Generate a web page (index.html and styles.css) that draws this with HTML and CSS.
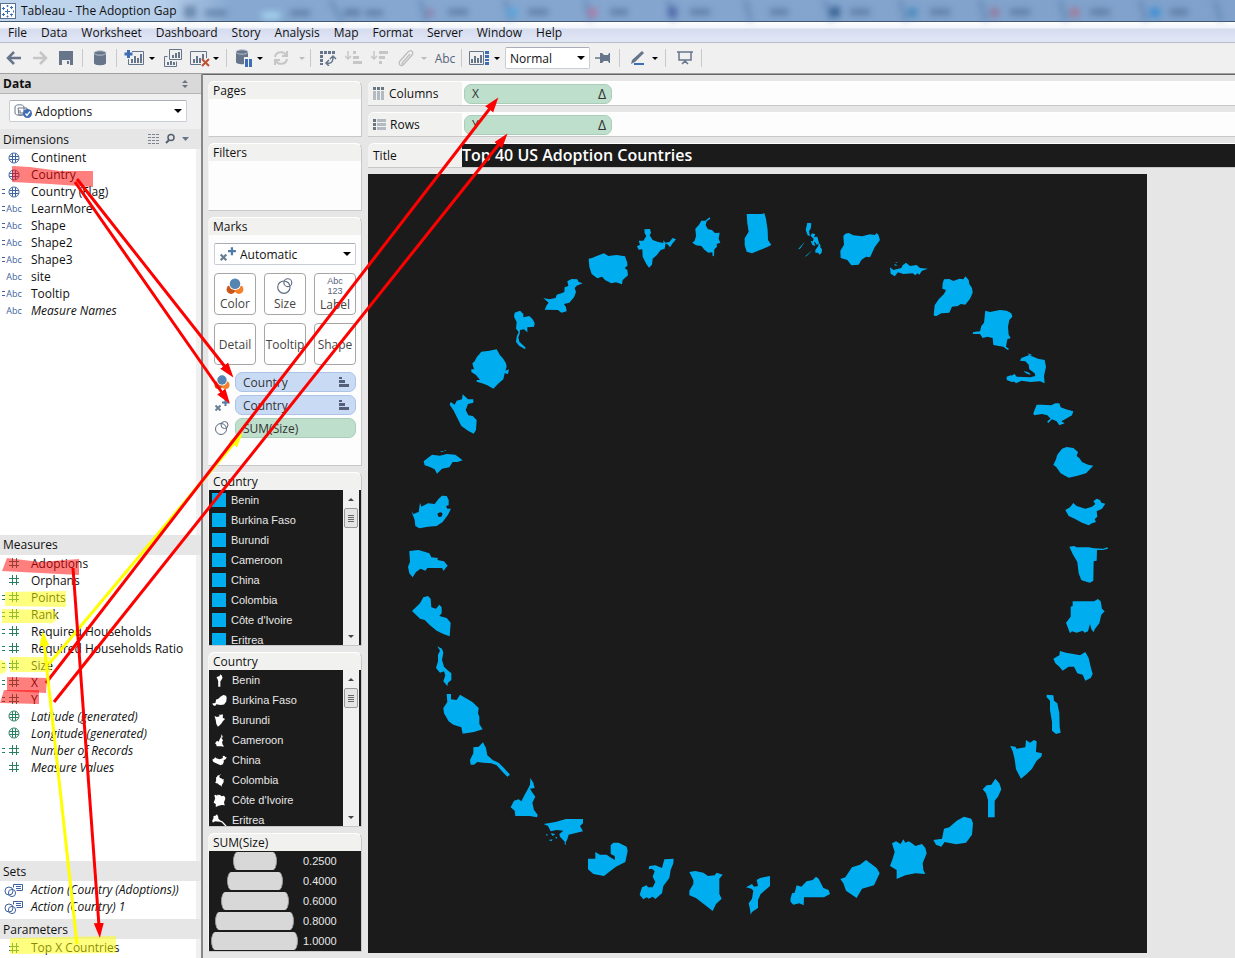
FILE: index.html
```html
<!DOCTYPE html>
<html lang="en">
<head>
<meta charset="utf-8">
<title>Tableau - The Adoption Gap</title>
<link rel="stylesheet" href="styles.css">
</head>
<body>
<svg class="defs" width="0" height="0" aria-hidden="true">
  <defs>
    <symbol id="globe" viewBox="0 0 12 12"><circle cx="6" cy="6" r="5"/><path d="M4.500 1.500v9M7.500 1.500v9M1.500 4.500h9M1.500 7.500h9"/></symbol>
    <symbol id="hash" viewBox="0 0 12 12"><path d="M4.500 1v10M8.500 1v10M1 4.500h10M1 8.500h10"/></symbol>
    <symbol id="set" viewBox="0 0 20 14"><circle cx="5" cy="8" r="4"/><circle cx="8" cy="10" r="3.600"/><path d="M9.500 1.500h9v6h-6M9.500 1.500v3M12 3.500h5M12 5.500h5"/></symbol>
    <symbol id="colors" viewBox="0 0 16 16"><circle cx="4.500" cy="11" r="4" fill="#c8571a"/><circle cx="11.500" cy="11" r="4" fill="#f5812a"/><circle cx="8" cy="6" r="5.500" fill="#fff"/><circle cx="8" cy="6" r="4.700" fill="#5585b0"/></symbol>
    <symbol id="sizes" viewBox="0 0 16 16"><circle cx="7" cy="9" r="5.500" fill="none" stroke="#5c6b80"/><circle cx="10.500" cy="5" r="3.500" fill="none" stroke="#5c6b80"/></symbol>
    <symbol id="shapes" viewBox="0 0 16 16"><path d="M1.500 8.500l5 5M6.500 8.500l-5 5" stroke="#6b7f94" stroke-width="2"/><path d="M11.500 2v7M8 5.500h7" stroke="#4f7ba6" stroke-width="2"/></symbol>
    <symbol id="sort" viewBox="0 0 12 12"><path d="M1 1h3v2H1zM1 4h6v3H1zM1 8h10v3H1z" fill="#555f77"/></symbol>
  </defs>
</svg>

<div class="app">
  <header class="titlebar">
    <svg class="tabs-behind" viewBox="0 0 1235 21" preserveAspectRatio="none" aria-hidden="true">
      <g class="tab-seams"><path d="M330 0l12 21M420 0l6 21M505 0l6 21M585 0l6 21M668 0l6 21M745 0l6 21M825 0l6 21M900 0l6 21M980 0l6 21M1060 0l6 21M1140 0l6 21M1215 0l6 21"/></g>
      <g class="tab-dark"><path d="M184 6h12v12h-12zM344 9h16v7h-16zM448 9h20v6h-20zM528 9h20v6h-20zM610 9h18v6h-18zM690 9h20v6h-20zM770 9h18v6h-18zM850 9h20v6h-20zM930 9h20v6h-20zM1010 9h20v6h-20zM1090 9h20v6h-20zM1170 9h18v6h-18zM205 10h22v6h-22zM290 10h20v6h-20zM365 10h18v6h-18z"/></g>
      <g><path d="M426 9h8v8h-8z" fill="#8d86ac"/><path d="M508 8h9v9h-9z" fill="#5aa5dc"/><path d="M588 8h9v9h-9z" fill="#ab7da8"/><path d="M668 7h9v10h-9z" fill="#4f69a8"/><path d="M830 7h10v10h-10z" fill="#3b6594"/><path d="M908 8h9v9h-9z" fill="#4a8cbd"/><path d="M990 8h9v9h-9z" fill="#947c9f"/><path d="M1070 8h9v9h-9z" fill="#a07b99"/><path d="M1150 8h10v9h-10z" fill="#3f8fd4"/><path d="M262 12h18v7h-18z" fill="#a5d3ee"/></g>
    </svg>
    <svg class="logo" viewBox="0 0 16 16" aria-hidden="true"><rect x=".5" y=".5" width="15" height="15" fill="#fff" stroke="#59708e"/><path d="M7.500 6v5M5 8.500h5M3.500 4v3M2 5.500h3M11.500 3v3M10 4.500h3M3.500 10v3M2 11.500h3M11.500 10.500v3M10 11.500h3M7.500 2v2M6.500 3h2M7.500 12.500v2M6.500 13.500h2M13.500 7.500v2" stroke="#3a6fb5"/></svg>
    <h1>Tableau - The Adoption Gap</h1>
  </header>

  <nav class="menubar" aria-label="Menu">
    <button>File</button><button>Data</button><button>Worksheet</button><button>Dashboard</button><button>Story</button><button>Analysis</button><button>Map</button><button>Format</button><button>Server</button><button>Window</button><button>Help</button>
  </nav>

  <div class="toolbar" role="toolbar" aria-label="Toolbar">
    <button aria-label="Back"><svg width="16" height="16" viewBox="0 0 16 16"><path d="M15 8H3M8 2L2 8l6 6" fill="none" stroke="#66758a" stroke-width="2.500"/></svg></button>
    <button aria-label="Forward"><svg width="16" height="16" viewBox="0 0 16 16"><path d="M1 8h12M8 2l6 6-6 6" fill="none" stroke="#c6c6c6" stroke-width="2.500"/></svg></button>
    <button aria-label="Save"><svg width="16" height="16" viewBox="0 0 16 16"><path d="M1 1h14v14H1z" fill="#66758a"/><path d="M4 10h8v5H4z" fill="#eee"/><path d="M9 11h2v3H9z" fill="#66758a"/></svg></button>
    <span class="sep"></span>
    <button aria-label="Connect to data"><svg width="16" height="16" viewBox="0 0 16 16"><path d="M2 3v10c0 3 12 3 12 0V3z" fill="#66758a"/><ellipse cx="8" cy="3" rx="6" ry="2.200" fill="#66758a" stroke="#b7bfca"/></svg></button>
    <span class="sep"></span>
    <button aria-label="New worksheet"><svg width="20" height="18" viewBox="0 0 20 18"><path d="M8 2.500h11.500v13H4.500V10" fill="none" stroke="#66758a"/><path d="M7 10h2v4H7zM10 7h2v7h-2zM13 9h2v5h-2zM16 5h2v9h-2z" fill="#66758a"/><path d="M4.500 1v8M.5 5h8" stroke="#3e6db5" stroke-width="3"/></svg></button>
    <button class="caret" aria-label="New worksheet options"></button>
    <button class="wide" aria-label="Duplicate"><svg width="18" height="18" viewBox="0 0 18 18"><path d="M5.500.5h12v10h-12zM3.500 7.500h-3v10h12v-5" fill="none" stroke="#66758a"/><path d="M8 6h2v3H8zM11 4h2v5h-2zM14 3h2v6h-2zM3 13h2v3H3zM6 12h2v4H6zM9 13h2v3H9z" fill="#66758a"/></svg></button>
    <button class="narrow" aria-label="Clear sheet"><svg width="20" height="18" viewBox="0 0 20 18"><path d="M11 15.500H.5v-13h16V9" fill="none" stroke="#66758a"/><path d="M3 10h2v4H3zM6 7h2v7H6zM9 9h2v5H9zM12 5h2v5h-2z" fill="#66758a"/><path d="M12 10l7 7M19 10l-7 7" stroke="#bd5130" stroke-width="2"/></svg></button>
    <button class="caret" aria-label="Clear options"></button>
    <span class="sep roomy"></span>
    <button class="narrow" aria-label="Pause auto updates"><svg width="18" height="18" viewBox="0 0 18 18"><path d="M1 3v10c0 2 6 2.500 8 2V8h4V3z" fill="#66758a"/><ellipse cx="7" cy="3" rx="6" ry="2.200" fill="#66758a" stroke="#b7bfca"/><path d="M10 10h3v8h-3zM14 10h3v8h-3z" fill="#3e6db5"/></svg></button>
    <button class="caret" aria-label="Auto update options"></button>
    <button class="wide" aria-label="Run update"><svg width="16" height="16" viewBox="0 0 16 16"><path d="M2 7c1-6 9-6 11-2M14 9c-1 6-9 6-11 2M14 1v5H9M2 15v-5h5" fill="none" stroke="#c6c6c6" stroke-width="2"/></svg></button>
    <button class="caret off" aria-label="Update options"></button>
    <span class="sep"></span>
    <button aria-label="Swap"><svg width="18" height="16" viewBox="0 0 18 16"><path d="M1 1h3v3H1zM5 1h3v3H5zM9 1h3v3H9zM13 1h3v3h-3zM1 5h3v3H1zM1 9h3v3H1zM1 13h3v2H1z" fill="#66758a"/><path d="M8 13c5 1 6-2 6-6M11 9l3-3 3 3M10 10l-3 3 3 3" fill="none" stroke="#66758a" stroke-width="1.500"/></svg></button>
    <button aria-label="Sort ascending"><svg width="18" height="16" viewBox="0 0 18 16"><path d="M3 1v8M0 6l3 3 3-3" fill="none" stroke="#c6c6c6" stroke-width="1.500"/><path d="M8 1h3v3H8zM8 6h6v3H8zM8 11h9v3H8z" fill="#c6c6c6"/></svg></button>
    <button aria-label="Sort descending"><svg width="18" height="16" viewBox="0 0 18 16"><path d="M3 1v8M0 6l3 3 3-3" fill="none" stroke="#c6c6c6" stroke-width="1.500"/><path d="M8 1h9v3H8zM8 6h6v3H8zM8 11h3v3H8z" fill="#c6c6c6"/></svg></button>
    <button aria-label="Group"><svg width="16" height="18" viewBox="0 0 16 18"><path d="M12 5l-7 8c-2 2 0 3 1 2l8-9c2-3-1-6-4-3L2 12c-2 3 1 6 3 4" fill="none" stroke="#bdbdbd" stroke-width="1.300"/></svg></button>
    <button class="caret off" aria-label="Group options"></button>
    <button class="wide abc">Abc</button>
    <span class="sep tight"></span>
    <button aria-label="Show cards"><svg width="20" height="16" viewBox="0 0 20 16"><path d="M.5 1.500h14v13H.5z" fill="none" stroke="#66758a"/><path d="M2 9h2v4H2zM5 6h2v7H5zM8 8h2v5H8zM11 5h2v8h-2z" fill="#66758a"/><path d="M16 1h4v3h-4zM16 5h4v3h-4zM16 9h4v2h-4zM16 12h4v3h-4z" fill="#3e6db5"/></svg></button>
    <button class="caret" aria-label="Card options"></button>
    <span class="select fit"><select aria-label="Fit"><option>Normal</option></select></span>
    <button aria-label="Fix axes"><svg width="16" height="12" viewBox="0 0 16 12"><path d="M0 6h6" stroke="#66758a" stroke-width="1.500"/><path d="M5 1h2l2 2h4l1-2h1v10h-1l-1-2H9l-2 2H5z" fill="#66758a"/></svg></button>
    <span class="sep"></span>
    <button aria-label="Highlight"><svg width="16" height="16" viewBox="0 0 16 16"><path d="M13 1l2 2-9 9-4 2 1-4z" fill="#66758a"/><path d="M5 14h10" stroke="#3e6db5" stroke-width="2"/></svg></button>
    <button class="caret" aria-label="Highlight options"></button>
    <span class="sep roomy"></span>
    <button aria-label="Presentation mode"><svg width="16" height="16" viewBox="0 0 16 16"><path d="M0 2h16M2 2v8h12V2M8 10v2M5 14l3-3 3 3" fill="none" stroke="#66758a" stroke-width="1.500"/></svg></button>
    <span class="sep"></span>
  </div>

  <div class="main">
    <aside class="data-pane">
      <div class="pane-head"><h2>Data</h2><svg width="6" height="8" viewBox="0 0 6 8"><path d="M0 3l3-3 3 3zM0 5h6L3 8z" fill="#6b7280"/></svg></div>
      <div class="source">
        <span class="select"><svg class="source-icon" width="18" height="14" viewBox="0 0 18 14" aria-hidden="true"><path d="M1 3c0-3 9-3 9 0v6c0 3-9 3-9 0zM4 4h9v7H5z" fill="#fff" stroke="#66758a"/><path d="M6 6v3h4" fill="none" stroke="#66758a"/><circle cx="13.500" cy="9.500" r="4.500" fill="#3e6db5"/><path d="M11.500 9.500l1.500 2 3-4" fill="none" stroke="#fff" stroke-width="1.300"/></svg><select aria-label="Data source"><option>Adoptions</option></select></span>
      </div>

      <div class="section-head"><h3>Dimensions</h3>
        <svg width="42" height="12" viewBox="0 0 42 12" aria-hidden="true"><path d="M0 1.500h12M0 4.500h12M0 7.500h12M0 10.500h12" stroke="#7b8490" stroke-dasharray="3 1"/><circle cx="23" cy="4.500" r="3" fill="none" stroke="#55606f" stroke-width="1.500"/><path d="M21 7l-3 3" stroke="#55606f" stroke-width="2"/><path d="M34 4h7l-3.500 4z" fill="#66758a"/></svg>
      </div>
      <ul class="fields blue dims">
        <li><i><svg><use href="#globe"/></svg></i>Continent</li>
        <li><i><svg><use href="#globe"/></svg></i>Country</li>
        <li><i class="calc"><svg><use href="#globe"/></svg></i>Country (Flag)</li>
        <li><i class="calc">Abc</i>LearnMore</li>
        <li><i class="calc">Abc</i>Shape</li>
        <li><i class="calc">Abc</i>Shape2</li>
        <li><i class="calc">Abc</i>Shape3</li>
        <li><i>Abc</i>site</li>
        <li><i class="calc">Abc</i>Tooltip</li>
        <li class="gen"><i>Abc</i>Measure Names</li>
      </ul>

      <div class="section-head"><h3>Measures</h3></div>
      <ul class="fields green measures">
        <li><i><svg><use href="#hash"/></svg></i>Adoptions</li>
        <li><i><svg><use href="#hash"/></svg></i>Orphans</li>
        <li><i class="calc"><svg><use href="#hash"/></svg></i>Points</li>
        <li><i class="calc"><svg><use href="#hash"/></svg></i>Rank</li>
        <li><i class="calc"><svg><use href="#hash"/></svg></i>Required Households</li>
        <li><i class="calc"><svg><use href="#hash"/></svg></i>Required Households Ratio</li>
        <li><i class="calc"><svg><use href="#hash"/></svg></i>Size</li>
        <li><i class="calc"><svg><use href="#hash"/></svg></i>X</li>
        <li><i class="calc"><svg><use href="#hash"/></svg></i>Y</li>
        <li class="gen"><i><svg><use href="#globe"/></svg></i>Latitude (generated)</li>
        <li class="gen"><i><svg><use href="#globe"/></svg></i>Longitude (generated)</li>
        <li class="gen"><i class="calc"><svg><use href="#hash"/></svg></i>Number of Records</li>
        <li class="gen"><i><svg><use href="#hash"/></svg></i>Measure Values</li>
      </ul>

      <div class="section-head"><h3>Sets</h3></div>
      <ul class="fields blue sets">
        <li class="gen"><i><svg class="set-icon"><use href="#set"/></svg></i>Action (Country (Adoptions))</li>
        <li class="gen"><i><svg class="set-icon"><use href="#set"/></svg></i>Action (Country) 1</li>
      </ul>
      <div class="section-head"><h3>Parameters</h3></div>
      <ul class="fields green"><li><i><svg><use href="#hash"/></svg></i>Top X Countries</li></ul>
    </aside>

    <div class="workspace">
      <div class="cards">
        <section class="card"><h3>Pages</h3><div class="drop pages"></div></section>
        <section class="card"><h3>Filters</h3><div class="drop filters"></div></section>
        <section class="card"><h3>Marks</h3>
          <div class="marks">
            <span class="select"><svg width="18" height="18" aria-hidden="true"><use href="#shapes"/></svg><select aria-label="Mark type"><option>Automatic</option></select></span>
            <div class="mark-buttons">
              <button><svg width="18" height="18"><use href="#colors"/></svg>Color</button>
              <button><svg width="18" height="18"><use href="#sizes"/></svg>Size</button>
              <button class="label"><small>Abc</small><small>123</small>Label</button>
              <button>Detail</button><button>Tooltip</button><button>Shape</button>
            </div>
            <div class="encodings">
              <svg width="16" height="16"><use href="#colors"/></svg><button class="pill dim">Country<svg width="12" height="12"><use href="#sort"/></svg></button>
              <svg width="16" height="16"><use href="#shapes"/></svg><button class="pill dim">Country<svg width="12" height="12"><use href="#sort"/></svg></button>
              <svg width="16" height="16"><use href="#sizes"/></svg><button class="pill">SUM(Size)</button>
            </div>
          </div>
        </section>

        <section class="card"><h3>Country</h3>
          <div class="legend">
            <ul>
              <li><b></b>Benin</li><li><b></b>Burkina Faso</li><li><b></b>Burundi</li><li><b></b>Cameroon</li><li><b></b>China</li><li><b></b>Colombia</li><li><b></b>Côte d'Ivoire</li><li><b></b>Eritrea</li>
            </ul>
            <div class="scroll"><span class="up"></span><span class="thumb"></span><span class="down"></span></div>
          </div>
        </section>

        <section class="card"><h3>Country</h3>
          <div class="legend shape-legend">
            <ul>
              <li><svg viewBox="664 774 64 120"><use href="#benin"/></svg>Benin</li>
              <li><svg viewBox="518 888 124 94"><use href="#burkina"/></svg>Burkina Faso</li>
              <li><svg viewBox="748 658 100 120"><use href="#burundi"/></svg>Burundi</li>
              <li><svg viewBox="330 772 86 122"><use href="#cameroon"/></svg>Cameroon</li>
              <li><svg viewBox="914 894 124 84"><use href="#china"/></svg>China</li>
              <li><svg viewBox="874 50 90 122"><use href="#colombia"/></svg>Colombia</li>
              <li><svg viewBox="388 956 114 122"><use href="#ivoire"/></svg>Côte d'Ivoire</li>
              <li><svg viewBox="208 665 124 108"><use href="#eritrea"/></svg>Eritrea</li>
            </ul>
            <div class="scroll"><span class="up"></span><span class="thumb"></span><span class="down"></span></div>
          </div>
        </section>

        <section class="card"><h3>SUM(Size)</h3>
          <ul class="size-legend">
            <li><span><b style="width:44px"></b></span>0.2500</li>
            <li><span><b style="width:56px"></b></span>0.4000</li>
            <li><span><b style="width:68px"></b></span>0.6000</li>
            <li><span><b style="width:79px"></b></span>0.8000</li>
            <li><span><b style="width:87px"></b></span>1.0000</li>
          </ul>
        </section>
      </div>

      <div class="sheet">
        <div class="shelf"><h3><svg width="12" height="13" viewBox="0 0 12 13"><path d="M0 0h3v3H0zM4 0h3v3H4zM8 0h3v3H8z" fill="#6b7683"/><path d="M0 4h3v9H0zM4 4h3v9H4zM8 4h3v9H8z" fill="#b4bac1"/></svg>Columns</h3><div class="well"><button class="pill">X<span>Δ</span></button></div></div>
        <div class="shelf"><h3><svg width="13" height="11" viewBox="0 0 13 11"><path d="M0 0h3v3H0zM0 4h3v3H0zM0 8h3v3H0z" fill="#6b7683"/><path d="M4 0h9v3H4zM4 4h9v3H4zM4 8h9v3H4z" fill="#b4bac1"/></svg>Rows</h3><div class="well"><button class="pill">Y<span>Δ</span></button></div></div>
        <div class="shelf"><h3>Title</h3><div class="well sheet-title"><h2>Top 40 US Adoption Countries</h2></div></div>

        <svg class="viz" viewBox="0 0 779 779" role="img" aria-label="Forty countries arranged in a ring">
          <g transform="translate(32 26) scale(.33333)">
            <polygon id="colombia" points="929,52 916,62 904,62 897,74 886,86 888,108 884,122 877,128 888,136 904,138 914,150 925,158 937,157 938,169 942,168 943,148 951,140 950,132 961,128 956,116 959,98 945,99 936,90 924,88 917,76 920,64 931,56"/>
            <polygon points="733,88 750,87 753,99 749,106 758,120 775,126 790,129 790,121 796,128 808,126 818,114 828,118 818,130 810,142 804,134 797,130 794,146 782,150 770,166 758,176 756,194 747,203 739,192 728,170 727,148 716,149 711,139 720,134 716,122 730,122 739,108 734,100"/>
            <polygon points="566,176 576,174 590,168 612,160 625,168 650,165 675,169 682,188 682,198 674,204 682,210 684,226 668,240 666,253 648,247 634,250 615,240 606,230 592,235 575,222 568,200"/>
            <polygon points="430,294 448,298 467,294 470,284 484,280 493,276 494,262 505,258 502,244 515,237 532,238 536,246 548,250 530,257 524,264 528,276 522,292 508,308 492,312 498,322 500,334 484,338 474,330 434,329 440,316 446,308"/>
            <polygon points="344,338 360,332 370,342 370,352 388,348 398,358 404,370 402,380 382,382 382,397 372,388 360,390 359,402 355,412 358,425 376,442 376,448 358,438 348,426 350,410 356,396 348,386 350,366 342,350"/>
            <polygon points="244,455 268,452 290,448 300,466 308,474 318,490 320,500 316,512 327,508 324,522 314,520 310,538 296,550 280,566 262,556 246,550 230,545 230,540 240,540 228,525 214,516 214,508 222,508 217,490 224,484 230,472"/>
            <polygon points="188,583 204,598 220,598 220,608 204,612 197,630 205,646 218,648 230,660 228,690 221,701 204,692 184,678 172,654 160,630 149,614 152,606 164,614 170,602 186,598"/>
            <polygon points="71,784 96,764 120,767 140,762 166,764 174,770 188,781 172,786 158,786 148,802 126,806 111,821 104,808 88,800 74,796"/>
            <path d="M122 753h8v2h-8zM134 750h4v2h-4z"/>
            <path fill-rule="evenodd" d="M34 933l6 9 16-6 4-28 4 12 20-10 20 2 12-16 10-9 14 1 6 12v16l-8 2 4 8 11 0-9 18-16 22-18 12-26 2-26 5-12-7-2-18zM112 942l4 9 8-1 4-8-4-5-8 1z"/>
            <polygon points="1040,42 1084,42 1093,40 1098,56 1103,90 1104,120 1114,135 1100,142 1080,150 1056,160 1040,155 1034,135 1034,115 1046,95 1042,70"/>
          </g>
          <g transform="translate(392 26) scale(.33333)">
            <path d="M142 68l12 2-2 16-5 8 3 14-7-2-6-16zM156 100l10 3-4 8 10-1 5 18-6 7-7-10-8 6 5-15-9-8zM152 122l10 4 4 12-9-3zM166 150l10-14 10 12-1 10-6 6-5-6-8 0zM174 130l6 2 2 8-5 3zM114 148l22-24-16 22zM134 170l24-20-18 18z"/>
            <polygon points="250,108 256,101 266,99 280,106 306,109 330,103 345,105 350,99 355,104 360,120 344,142 330,172 318,170 304,180 296,194 274,196 262,180 242,174 241,152 252,134"/>
            <path d="M390 202l10 8 24-6 4-8 10-8 12 10 20-3 10 9 24 2-18 6-8 12-6-4-6 6-8-6-28 2-16-5-10 12-12-8zM403 192l10 4-8 1zM406 186l8 2-6 1z"/>
            <polygon points="552,238 568,237 580,243 598,236 610,238 616,229 626,240 628,252 636,264 638,278 630,296 616,314 602,312 594,318 576,320 568,338 544,340 528,349 521,346 524,316 536,298 552,282 558,270 547,266 548,250"/>
            <polygon points="676,332 690,336 720,330 740,332 754,340 757,350 748,360 744,380 746,404 752,414 742,418 738,440 748,448 742,449 730,440 700,435 698,414 682,410 668,414 660,402 638,402 640,396 660,394 664,378 672,368"/>
            <path d="M784 474l22-8 14 4 14 6 20 4 4 20-6 28 2 22-14-6-28 2-28-4-16 8-8-8-8-6v-8l12-6 6 8 40 2 16-4-2-8-16-12-2-14-10-10-16-2zM790 512l18 6 4 7-14-5zM803 460l14 5-8 2zM740 530l12-4 8 4 6 14-10 2-16-6z"/>
            <polygon points="820,640 830,614 846,614 874,616 886,610 898,610 902,622 918,628 940,634 936,646 918,656 904,664 914,670 898,676 890,664 876,658 864,670 862,664 872,656 862,646 846,642 822,646"/>
            <polygon points="906,746 920,741 940,744 954,756 950,768 958,774 966,786 984,794 1000,797 978,820 950,828 926,833 902,820 888,800 880,795 888,778 892,764"/>
            <polygon id="china" points="916,930 930,922 940,909 950,918 976,926 996,920 1006,912 1000,904 1010,896 1020,900 1024,908 1036,911 1026,926 1010,934 1012,950 1004,958 1008,966 996,970 986,976 966,968 944,956 926,948"/>
          </g>
          <g transform="translate(32 346) scale(.33333)">
            <polygon points="28,93 56,90 88,100 94,112 114,114 112,120 132,124 143,137 134,148 131,153 126,144 104,144 82,144 76,152 62,146 48,156 38,172 28,160 24,140 30,126"/>
            <polygon points="36,273 60,250 70,232 84,228 92,236 94,262 108,266 118,254 125,262 125,280 118,288 140,294 152,308 149,349 130,342 110,332 90,316 74,300 60,296"/>
            <polygon points="112,379 126,386 130,398 126,420 132,440 142,450 154,460 154,480 144,488 142,498 130,484 136,466 132,454 120,458 108,444 114,424 114,404 120,392"/>
            <polygon points="140,522 153,522 153,538 170,540 180,524 198,535 217,546 236,564 234,580 238,590 238,612 248,628 222,636 188,641 184,622 160,614 146,604 132,580 130,564 142,546"/>
            <polygon id="eritrea" points="220,682 236,680 249,667 258,684 262,706 278,720 296,728 312,744 330,764 322,770 308,756 290,736 274,730 250,728 232,726 222,734 212,734 210,720 220,700"/>
            <polygon id="cameroon" points="391,774 400,788 404,804 390,806 396,816 406,830 397,848 402,870 413,884 411,892 390,888 346,888 344,872 332,862 342,842 356,838 364,844 374,824 384,806 390,794"/>
            <path d="M431 912l35-6 32-9h51v13l-9 8 9 16-25 6-18 4-4 14-5 10-17-18-2-8 12-10-20-2-18 4-8-16zM438 942l6 2-4 4zM452 940l14 2-8 6zM446 960l12-2-4 6zM466 950l6 2-4 5zM493 968l5 0-2 8z"/>
            <polygon points="564,1016 586,1016 586,996 600,1004 620,1004 634,1014 645,1020 644,1008 632,1002 632,976 640,968 656,968 680,980 683,992 676,1026 648,1040 630,1054 612,1068 580,1062 564,1048"/>
            <polygon points="793,1018 821,1016 820,1030 812,1050 808,1074 790,1098 786,1120 766,1137 758,1130 746,1136 740,1132 730,1138 719,1124 726,1102 740,1096 744,1102 758,1102 766,1086 758,1070 764,1054 756,1046 746,1048 748,1038 766,1036 786,1044"/>
            <polygon points="868,1056 886,1053 910,1058 924,1068 944,1066 950,1058 968,1064 958,1076 958,1122 965,1136 948,1152 938,1173 916,1156 888,1134 868,1126 868,1112 880,1092 880,1080"/>
            <polygon points="1038,1102 1056,1092 1062,1100 1074,1098 1070,1080 1080,1074 1110,1068 1110,1098 1096,1110 1082,1122 1074,1140 1074,1164 1056,1176 1052,1184 1050,1168 1046,1150 1056,1136 1060,1112 1054,1106"/>
          </g>
          <g transform="translate(392 346) scale(.33333)">
            <polygon points="928,80 944,78 948,82 986,82 1002,85 1030,86 1042,82 1044,86 1028,90 1011,90 1010,122 1001,124 1000,182 990,188 974,184 964,180 956,160 952,126 938,102"/>
            <polygon points="938,244 1002,244 1014,237 1022,244 1026,266 1034,274 1024,284 1018,310 1004,328 1001,337 994,328 990,312 984,334 974,338 968,332 950,338 936,334 930,340 918,308 932,290 932,260 938,258"/>
            <polygon points="880,416 898,406 900,393 918,398 940,402 960,406 976,396 986,414 992,440 998,462 992,474 976,482 968,464 952,460 942,440 926,440 908,452 898,440 886,430"/>
            <polygon points="860,524 880,526 882,542 892,550 898,580 899,620 902,638 888,642 876,632 876,606 870,570 870,542 860,532"/>
            <polygon id="burundi" points="751,678 766,680 770,686 796,682 798,660 810,668 822,660 830,664 828,696 846,700 844,710 830,722 816,746 800,762 783,776 768,748 764,718 758,694"/>
            <polygon id="benin" points="668,808 680,796 694,794 706,776 718,790 724,808 714,830 704,842 704,892 684,892 684,840 678,820"/>
            <polygon id="burkina" points="520,960 546,956 552,926 568,922 590,902 612,890 634,896 639,910 636,944 618,968 588,973 554,966 544,980 528,974"/>
            <polygon id="ivoire" points="396,970 408,964 422,972 430,958 436,968 446,964 456,970 466,978 486,972 496,984 500,1000 488,1030 490,1050 496,1062 466,1060 436,1066 410,1077 410,1050 390,1038 398,1016 404,996"/>
            <polygon points="241,1077 256,1072 276,1042 300,1034 318,1020 350,1044 359,1060 342,1096 306,1106 290,1134 258,1112 250,1090"/>
            <polygon points="91,1138 96,1120 104,1118 110,1096 124,1100 140,1084 158,1080 168,1070 176,1076 190,1104 206,1110 210,1122 192,1132 132,1132 131,1156 118,1150 100,1154 92,1146"/>
          </g>
        </svg>
      </div>
    </div>
  </div>

  <svg class="annotations" width="1235" height="958" viewBox="0 0 1235 958" aria-hidden="true">
    <defs>
      <marker id="red-tip" markerUnits="userSpaceOnUse" markerWidth="16" markerHeight="12" refX="3" refY="6" orient="auto"><path d="M0 1l15 5-15 5z" fill="#f00"/></marker>
      <marker id="yellow-tip" markerUnits="userSpaceOnUse" markerWidth="16" markerHeight="12" refX="3" refY="6" orient="auto"><path d="M0 1l15 5-15 5z" fill="#ff0"/></marker>
    </defs>
    <g fill="#f00" fill-opacity=".5">
      <path d="M12 166l18 1 30 4 33 0v16l-43-3-38-2z"/><path d="M7 558l33 4 39-3v16l-39-2-38-2z"/><path d="M7 677l40 1-1 15-39-2z"/><path d="M4 690h35v14l-39-1z"/>
    </g>
    <g fill="#ff0" fill-opacity=".5">
      <path d="M5 592l61-1v16l-61-1z"/><path d="M2 609l45 1a7 7 0 1 1 1 13l-46 0z"/><path d="M10 657h41v15H10zM0 660a7 7 0 0 1 0 14z"/><path d="M10 938l106-2v17l-106 1z"/>
    </g>
    <path d="M49 664L235 442" stroke="#ff0" stroke-width="3" marker-end="url(#yellow-tip)"/>
    <g stroke="#f00" stroke-width="3">
      <path d="M77 179L226 368" marker-end="url(#red-tip)"/><path d="M75 182L223 394" marker-end="url(#red-tip)"/>
      <path d="M46 683L491 107" marker-end="url(#red-tip)"/><path d="M54 702L500 143" marker-end="url(#red-tip)"/>
      <path d="M73 568L99 926" marker-end="url(#red-tip)"/>
    </g>
    <path d="M77 944L44 643" stroke="#ff0" stroke-width="3" marker-end="url(#yellow-tip)"/>
  </svg>
</div>
</body>
</html>
```
FILE: styles.css
```css
* { box-sizing: border-box; }
body { margin: 0; font: 12px/17px "Segoe UI", "Open Sans", "Noto Sans", sans-serif; color: #111; }
h1, h2, h3, ul { margin: 0; padding: 0; font-size: 12px; font-weight: 400; list-style: none; }
button, select { font: inherit; color: inherit; border: 0; background: none; padding: 0; margin: 0; }
svg { flex: none; }
.defs { position: absolute; }

.app { position: relative; display: flex; flex-direction: column; min-height: 100vh; overflow: hidden; }

/* window chrome */
.titlebar { position: relative; display: flex; align-items: center; gap: 5px; height: 22px; border-bottom: 1px solid #42566f; background: linear-gradient(90deg, #c2d7ee 0, #b7cfea 160px, #87a9d1 230px, #7fa1cb 100%); }
.tabs-behind { position: absolute; inset: 0; width: 100%; height: 21px; filter: blur(3px); }
.tab-seams { fill: none; stroke: #5f83b1; stroke-width: 5; opacity: .6; }
.tab-dark { fill: #47648d; opacity: .6; }
.logo { position: relative; width: 16px; height: 16px; }
.titlebar h1 { position: relative; }

.menubar { display: flex; gap: 14px; padding: 0 8px; height: 21px; border-bottom: 1px solid #b6bccc; background: linear-gradient(#fff 0, #f1f4fb 6px, #d5dcee 7px, #e2e7f6 100%); }

.toolbar { display: flex; align-items: center; height: 31px; padding-left: 1px; background: #f0f0f0; border-bottom: 1px solid #a0a0a0; }
.toolbar button { display: flex; justify-content: center; align-items: center; flex: none; width: 26px; height: 24px; }
.toolbar .wide { width: 32px; }
.toolbar .narrow { width: 22px; }
.toolbar .caret { width: 10px; }
.toolbar .abc { color: #55637a; }
.caret::after, .select::after { content: ""; border: 4px solid transparent; border-top-color: #000; border-bottom: 0; }
.caret::after { border-width: 3px 3px 0; }
.caret.off::after { border-top-color: #bbb; }
.sep { flex: none; width: 1px; height: 18px; margin: 0 4px 0 3px; background: #c8c8c8; }
.sep.roomy { margin: 0 6px 0 5px; }
.sep.tight { margin: 0 4px 0 0; }

.select { display: flex; align-items: center; gap: 3px; height: 22px; padding: 0 4px; background: #fff; border: 1px solid #c9cdd6; border-top-color: #a8adb8; border-radius: 2px; }
.select select { flex: 1; min-width: 0; appearance: none; outline: 0; }
.select.fit { width: 85px; margin-left: 3px; }

.main { display: flex; flex: 1; }

/* data pane */
.data-pane { display: flex; flex-direction: column; flex: none; width: 203px; border-right: 2px solid #888; background: #f0f0f0; }
.pane-head { display: flex; align-items: center; justify-content: space-between; height: 20px; padding: 0 13px 0 3px; background: #d9d9d9; border-bottom: 1px solid #b5b5b5; }
.pane-head h2 { font-weight: 700; }
.source { padding: 6px 14px 7px 9px; }
.section-head { display: flex; align-items: center; justify-content: space-between; height: 20px; padding: 0 11px 0 3px; background: #e6e6e6; }
.fields { margin-right: 5px; background: #fff; padding-bottom: 2px; }
.fields li { display: flex; align-items: center; height: 17px; white-space: nowrap; }
.fields i { position: relative; display: flex; align-items: center; justify-content: center; flex: none; width: 28px; margin-right: 3px; font-size: 9px; font-style: normal; }
.fields svg { width: 12px; height: 12px; fill: none; stroke: currentColor; }
.fields .set-icon { width: 20px; height: 14px; }
.fields .calc::before { content: ""; position: absolute; left: 2px; width: 3px; height: 3px; border: solid currentColor; border-width: 1px 0; }
.fields .gen { font-style: italic; }
.blue i { color: #3e62a0; }
.green i { color: #2a7f61; }
.dims { flex: 386 0 0; }
.measures { flex: 306 0 0; }
.fields.sets { padding-bottom: 4px; }

/* workspace */
.workspace { display: flex; flex: 1; min-width: 0; gap: 6px; padding: 6px 0 5px 5px; background: #e6e6e6; border-top: 1px solid #666; }
.cards { display: flex; flex-direction: column; gap: 6px; flex: none; width: 154px; }
.card { background: #fdfdfd; border: 1px solid #c8c8c8; border-top-color: #fff; border-left-color: #f4f4f4; border-radius: 6px 6px 0 0; }
.card h3 { height: 17px; padding-left: 4px; background: #f1f1ef; border-radius: 6px 6px 0 0; }
.pages { height: 37px; }
.filters { height: 49px; }
.marks { padding: 8px 5px 27px; }
.mark-buttons { display: grid; grid-template-columns: repeat(3, 42px); gap: 8px; padding: 8px 0 7px; }
.mark-buttons button { display: flex; flex-direction: column; align-items: center; justify-content: center; height: 42px; border: 1px solid #a6a6a6; border-radius: 4px; background: #fff; color: #444; white-space: nowrap; }
.mark-buttons small { font: 9px/10px "Liberation Sans", Arial, sans-serif; color: #55637a; }
.encodings { display: grid; grid-template-columns: 16px 1fr; gap: 3px 5px; align-items: center; }
.pill { display: flex; align-items: center; justify-content: space-between; height: 20px; padding: 0 5px 0 7px; border: 1px solid #aacdb9; border-radius: 7px; background: #bedfcc; color: #333; }
.pill.dim { border-color: #adc3e6; background: #c9daf5; }
.pill span { font-size: 14px; }

.legend { display: flex; height: 155px; overflow: hidden; padding-right: 2px; background: #1b1b1b; color: #e8e8e8; font: 11px/20px "Liberation Sans", Arial, sans-serif; }
.shape-legend { height: 156px; }
.legend ul { flex: 1; padding-left: 3px; font-size: 11px; }
.legend li { display: flex; align-items: center; gap: 5px; height: 20px; }
.legend b { width: 14px; height: 14px; background: #00aeef; }
.legend svg { width: 15px; height: 13px; fill: #fff; }
.scroll { display: flex; flex-direction: column; align-items: center; width: 16px; background: #f0f0f0; }
.up, .down { width: 6px; border: 3px solid transparent; }
.up { border-top: 0; border-bottom-color: #444; margin: 8px 0 7px; }
.down { border-bottom: 0; border-top-color: #444; margin: auto 0 7px; }
.thumb { width: 14px; height: 20px; border: 1px solid #999; border-radius: 2px; background: repeating-linear-gradient(#666 0 1px, transparent 1px 2px) center / 6px 7px no-repeat, #e4e4e4; }
.size-legend { background: #1b1b1b; color: #e8e8e8; font: 11px/20px "Liberation Sans", Arial, sans-serif; }
.size-legend li { display: flex; align-items: center; height: 20px; gap: 3px; }
.size-legend span { display: flex; justify-content: center; width: 91px; }
.size-legend b { height: 18px; border-radius: 4px / 9px; border: solid #999; border-width: 0 1px; background: #d8d8d8; }

.sheet { display: flex; flex-direction: column; gap: 6px; flex: 1; min-width: 0; }
.shelf { display: flex; height: 25px; border-top: 1px solid #fff; border-bottom: 1px solid #c8c8c8; border-radius: 6px 0 0 0; background: #f1f1ef; }
.shelf h3 { display: flex; align-items: center; gap: 4px; width: 94px; padding-left: 5px; }
.well { display: flex; align-items: center; flex: 1; padding: 0 2px; background: #fdfdfd; }
.well .pill { width: 148px; }
.sheet-title { padding: 0; background: #1b1b1b; color: #fff; }
.sheet-title h2 { font-size: 16px; font-weight: 600; }
.viz { width: 779px; background: #1b1b1b; fill: #00aeef; }

.annotations { position: absolute; top: 0; left: 0; pointer-events: none; }
```
